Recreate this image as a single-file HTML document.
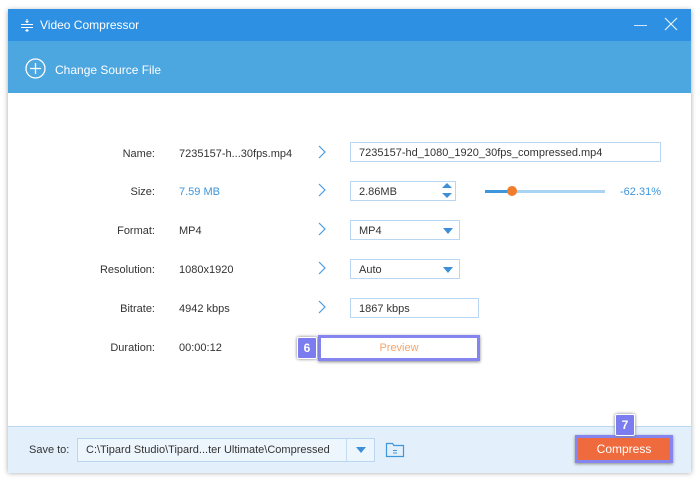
<!DOCTYPE html><html><head><style>
body{margin:0;width:700px;height:481px;background:#fff;font-family:"Liberation Sans",sans-serif;font-size:11px;color:#333;position:relative;overflow:hidden}
.win{position:absolute;left:8px;top:9px;width:683px;height:463px;background:#fff;box-shadow:0 1px 5px rgba(0,0,0,.35)}
.tb{position:absolute;left:0;top:0;width:683px;height:32px;background:#2e90e2;color:#fff;font-size:12px}
.sh{position:absolute;left:0;top:32px;width:683px;height:52px;background:#4ca6e0;color:#fff;font-size:12px}
.a{position:absolute}
.lbl{position:absolute;width:155px;text-align:right;left:0}
.box{position:absolute;border:1px solid #b9d6f2;background:#fff;height:20px;line-height:20px;padding-left:8px;box-sizing:border-box}
.chev{position:absolute;left:318px}
.tri{position:absolute;width:0;height:0;border-left:5px solid transparent;border-right:5px solid transparent;border-top:6px solid #3d8fd8}
.badge{position:absolute;width:18px;height:20px;background:#7b7cf0;color:#fff;font-weight:bold;font-size:12px;text-align:center;line-height:20px;border:1.5px solid #fff;box-shadow:0 0 3px #777;border-radius:2px}
</style></head><body>
<div class="win">
<div class="tb"><svg class="a" style="left:12px;top:9px" width="14" height="14"><path d="M1 6.5H13M1 9.5H13M7 1V4.5M5.5 3L7 4.5 8.5 3M7 15V11.5M5.5 13L7 11.5 8.5 13" stroke="#fff" fill="none"/></svg><span class="a" style="left:32px;top:9px">Video Compressor</span>
<div class="a" style="left:626px;top:16px;width:13px;height:1px;background:#cfe6fb"></div>
<svg class="a" style="left:656px;top:8px" width="14" height="14"><path d="M1 1L13 13M13 1L1 13" stroke="#e6f2fc" stroke-width="1.2"/></svg></div>
<div class="sh"><svg class="a" style="left:17px;top:17px" width="21" height="21"><circle cx="10.5" cy="10.5" r="9.5" stroke="#fff" stroke-width="1.3" fill="none"/><path d="M10.5 5V16M5 10.5H16" stroke="#fff" stroke-width="1.3"/></svg><span class="a" style="left:47px;top:22px">Change Source File</span></div>
</div>
<div class="lbl" style="top:148px">Name:</div><span class="a" style="left:179px;top:148px">7235157-h...30fps.mp4</span><svg class="chev" style="top:145px" width="8" height="14"><path d="M1 1L7 7 1 13" stroke="#4a9be0" fill="none" stroke-width="1.2"/></svg>
<div class="box" style="left:350px;top:142px;width:311px">7235157-hd_1080_1920_30fps_compressed.mp4</div>
<div class="lbl" style="top:186px">Size:</div><span class="a" style="left:179px;top:186px;color:#3d95dc">7.59 MB</span><svg class="chev" style="top:183px" width="8" height="14"><path d="M1 1L7 7 1 13" stroke="#4a9be0" fill="none" stroke-width="1.2"/></svg>
<div class="box" style="left:350px;top:181px;width:106px">2.86MB</div>
<div class="tri" style="left:442px;top:183px;border-top:none;border-bottom:5px solid #3d8fd8"></div><div class="tri" style="left:442px;top:193px;border-top-width:5px"></div>
<div class="a" style="left:485px;top:190px;width:120px;height:3px;background:#a9d3f3"></div><div class="a" style="left:485px;top:190px;width:27px;height:3px;background:#3d95dc"></div>
<div class="a" style="left:507px;top:186px;width:10px;height:10px;border-radius:50%;background:#f17c2c"></div>
<span class="a" style="left:620px;top:186px;color:#3d95dc">-62.31%</span>
<div class="lbl" style="top:225px">Format:</div><span class="a" style="left:179px;top:225px">MP4</span><svg class="chev" style="top:222px" width="8" height="14"><path d="M1 1L7 7 1 13" stroke="#4a9be0" fill="none" stroke-width="1.2"/></svg>
<div class="box" style="left:350px;top:220px;width:110px">MP4</div><div class="tri" style="left:443px;top:228px"></div>
<div class="lbl" style="top:264px">Resolution:</div><span class="a" style="left:179px;top:264px">1080x1920</span><svg class="chev" style="top:261px" width="8" height="14"><path d="M1 1L7 7 1 13" stroke="#4a9be0" fill="none" stroke-width="1.2"/></svg>
<div class="box" style="left:350px;top:259px;width:110px">Auto</div><div class="tri" style="left:443px;top:267px"></div>
<div class="lbl" style="top:303px">Bitrate:</div><span class="a" style="left:179px;top:303px">4942 kbps</span><svg class="chev" style="top:300px" width="8" height="14"><path d="M1 1L7 7 1 13" stroke="#4a9be0" fill="none" stroke-width="1.2"/></svg>
<div class="box" style="left:350px;top:298px;width:129px">1867 kbps</div>
<div class="lbl" style="top:342px">Duration:</div><span class="a" style="left:179px;top:342px">00:00:12</span>
<div class="a" style="left:318px;top:335px;width:156px;height:20px;border:3px solid #8485ef;box-shadow:0 1px 3px #888;background:#fff;text-align:center;line-height:20px;color:#f5a56a">Preview</div>
<div class="badge" style="left:297px;top:337px">6</div>
<div class="a" style="left:8px;top:426px;width:683px;height:46px;background:#e3f0fb;border-top:1px solid #b9d9f3"></div>
<span class="a" style="left:29px;top:444px">Save to:</span>
<div class="box" style="left:77px;top:438px;width:298px;height:24px;line-height:22px;background:#eef6fd">C:\Tipard Studio\Tipard...ter Ultimate\Compressed</div>
<div class="a" style="left:346px;top:439px;width:1px;height:22px;background:#c5dcf0"></div><div class="tri" style="left:356px;top:447px"></div>
<svg class="a" style="left:385px;top:440px" width="20" height="18"><path d="M1.5 3.5V16.5H18.5V5.5H9L7.5 3.5H3Z" stroke="#3d95dc" stroke-width="1.2" fill="none"/><path d="M8 10.5H12M8 13H12" stroke="#3d95dc"/></svg>
<div class="a" style="left:575px;top:435px;width:98px;height:28px;border:3px solid #8485ef;box-sizing:border-box;background:#ef6a3c;color:#fff;text-align:center;line-height:22px;font-size:12px;box-shadow:0 1px 3px #888">Compress</div>
<div class="badge" style="left:615px;top:414px">7</div>
</body></html>
